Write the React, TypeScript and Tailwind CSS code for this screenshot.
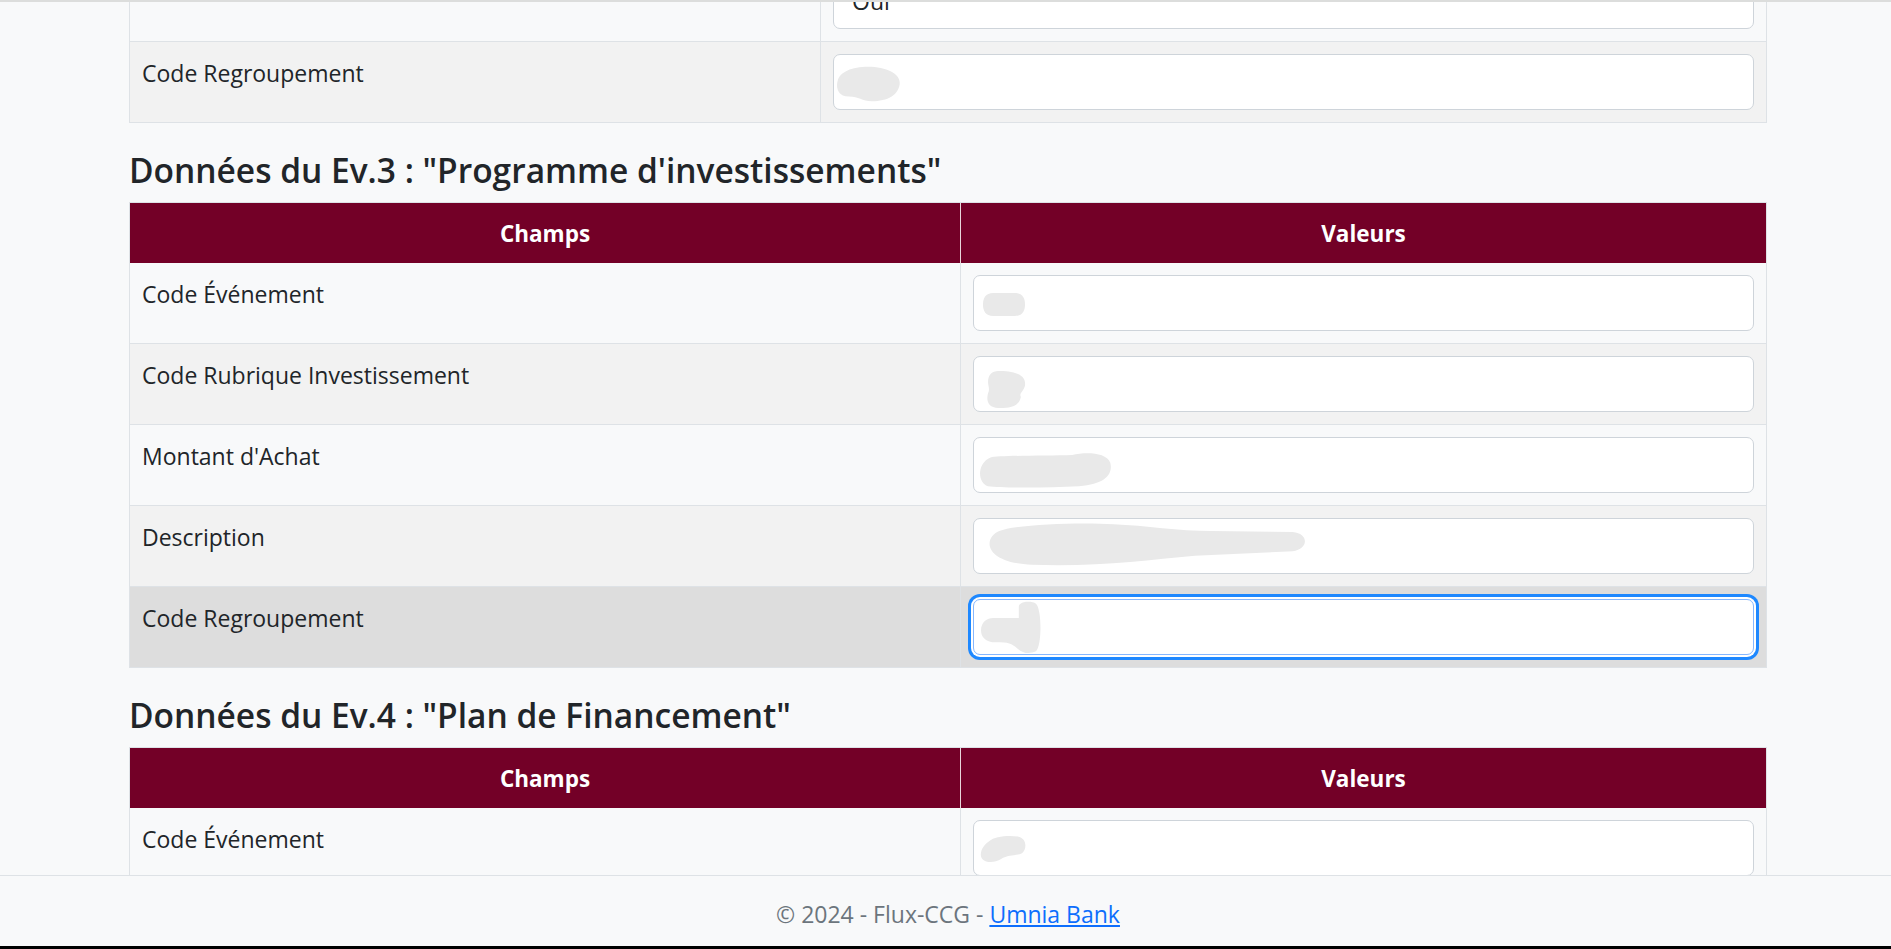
import React from "react";

function Blob({ className, d }: { className: string; d: string }) {
  return (
    <svg className={className} viewBox="0 0 100 100" preserveAspectRatio="none">
      <path d={d} fill="#e9e9e9" />
    </svg>
  );
}

const ROUND2 = "M45 2 C75 0 100 20 98 50 C96 80 80 98 55 98 C40 98 35 85 20 85 C5 85 0 65 2 45 C4 20 20 4 45 2Z";
const PILL = "M25 0 H75 C95 0 100 25 100 50 C100 75 95 100 75 100 H25 C5 100 0 75 0 50 C0 25 5 0 25 0Z";
const RUBR = "M30 0 C60 0 100 5 95 40 C92 55 80 60 85 70 C80 100 50 100 30 100 C5 100 0 80 5 60 C10 50 5 40 5 30 C5 10 15 0 30 0Z";
const MONT = "M10 15 C15 10 50 10 70 8 C80 0 95 0 98 30 C100 60 95 90 75 95 C50 100 20 100 8 95 C0 85 0 30 10 15Z";
const DESC = "M5 20 C10 5 30 0 40 5 C50 8 60 20 70 20 L95 22 C100 25 100 60 95 65 L65 75 C50 85 35 100 15 95 C0 90 0 35 5 20Z";
const THUMB = "M65 5 C70 0 85 0 90 5 C100 15 100 85 90 95 C80 100 70 100 60 90 C50 80 45 78 25 78 C5 78 0 65 0 55 C0 40 10 32 20 32 L62 32 L62 12 C62 8 63 6 65 5Z";
const EV4 = "M20 20 C30 5 60 0 80 5 C100 10 100 45 90 60 C80 70 60 65 45 80 C30 95 5 95 2 70 C0 50 10 30 20 20Z";

function Field({ children, focused }: { children?: React.ReactNode; focused?: boolean }) {
  return (
    <div
      className={
        focused
          ? "flex h-[56px] items-start rounded-[7px] border border-[#86b7fe] bg-white shadow-[0_0_0_2px_#ffffff,0_0_0_5px_#1e88ff]"
          : "flex h-[56px] items-start rounded-[7px] border border-[#ced4da] bg-white"
      }
    >
      {children}
    </div>
  );
}

function Row({
  label,
  wide,
  bg,
  children,
}: {
  label?: string;
  wide?: boolean;
  bg: string;
  children?: React.ReactNode;
}) {
  return (
    <div className={`flex h-[81px] border-b border-[#dee2e6] ${bg}`}>
      <div
        className={`${wide ? "w-[831px]" : "w-[691px]"} shrink-0 border-r border-[#dee2e6] px-[12px] pt-[13px] leading-[36px]`}
      >
        {label}
      </div>
      <div className="flex-1 px-[12px] pt-[12px]">{children}</div>
    </div>
  );
}

function Header() {
  return (
    <div className="flex h-[61px] border-t border-[#dee2e6] bg-[#730027] text-[22.5px] font-bold leading-[36px] text-white">
      <div className="flex w-[831px] shrink-0 items-center justify-center border-r border-[#e8d5da] pt-[2px]">
        Champs
      </div>
      <div className="flex flex-1 items-center justify-center pt-[2px]">Valeurs</div>
    </div>
  );
}

function Heading({ children }: { children: React.ReactNode }) {
  return (
    <h4 className="mb-[12px] mt-[27px] h-[40px] text-[33.5px] font-semibold leading-[40px] text-[#212529]">
      {children}
    </h4>
  );
}

export default function App() {
  return (
    <div className="flex h-[949px] flex-col overflow-hidden bg-[#f8f9fa] font-['Open_Sans',sans-serif] text-[23px] text-[#212529]">
      <main className="h-[875px] shrink-0 overflow-hidden">
        <div className="relative z-10 h-[2px] bg-[#dcdddc]" />
        <div className="-mt-[41px] ml-[129px] w-[1638px]">
          {/* Ev.2 tail */}
          <div className="border-x border-[#dee2e6]">
            <Row bg="bg-[#f8f9fa]">
              <Field>
                <span className="pl-[18px] pt-[9px] leading-[36px]">Oui</span>
              </Field>
            </Row>
            <Row label="Code Regroupement" bg="bg-[#f2f2f2]">
              <Field>
                <Blob className="ml-[2px] mt-[11px] h-[36px] w-[65px]" d={ROUND2} />
              </Field>
            </Row>
          </div>

          <Heading>Données du Ev.3 : "Programme d'investissements"</Heading>
          <div className="border-x border-[#dee2e6]">
            <Header />
            <Row wide label="Code Événement" bg="bg-[#f8f9fa]">
              <Field>
                <Blob className="ml-[9px] mt-[17px] h-[23px] w-[42px]" d={PILL} />
              </Field>
            </Row>
            <Row wide label="Code Rubrique Investissement" bg="bg-[#f2f2f2]">
              <Field>
                <Blob className="ml-[12px] mt-[14px] h-[37px] w-[41px]" d={RUBR} />
              </Field>
            </Row>
            <Row wide label="Montant d'Achat" bg="bg-[#f8f9fa]">
              <Field>
                <Blob className="ml-[3px] mt-[14px] h-[36px] w-[136px]" d={MONT} />
              </Field>
            </Row>
            <Row wide label="Description" bg="bg-[#f2f2f2]">
              <Field>
                <Blob className="ml-[9px] mt-[3px] h-[45px] w-[326px]" d={DESC} />
              </Field>
            </Row>
            <Row wide label="Code Regroupement" bg="bg-[#dddddd]">
              <Field focused>
                <Blob className="ml-[7px] mt-[1px] h-[53px] w-[61px]" d={THUMB} />
              </Field>
            </Row>
          </div>

          <Heading>Données du Ev.4 : "Plan de Financement"</Heading>
          <div className="border-x border-[#dee2e6]">
            <Header />
            <Row wide label="Code Événement" bg="bg-[#f8f9fa]">
              <Field>
                <Blob className="ml-[6px] mt-[14px] h-[30px] w-[47px]" d={EV4} />
              </Field>
            </Row>
          </div>
        </div>
      </main>
      <footer className="h-[71px] shrink-0 border-t border-[#dee2e6] bg-[#f8f9fa]">
        <div className="ml-[129px] w-[1638px] pt-[20px] text-center leading-[36px] text-[#6c757d]">
          © 2024 - Flux-CCG -{" "}
          <a href="#" className="text-[#0d6efd] underline">
            Umnia Bank
          </a>
        </div>
      </footer>
      <div className="h-[3px] shrink-0 bg-black" />
    </div>
  );
}
